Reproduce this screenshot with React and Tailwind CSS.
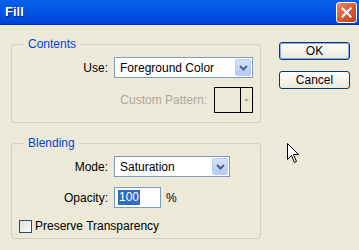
import React from 'react';

const font = { fontFamily: '"Liberation Sans", Arial, sans-serif' };

function Chevron() {
  return (
    <svg width="9" height="6" viewBox="0 0 9 6">
      <path d="M1 1 L4.5 4.5 L8 1" fill="none" stroke="#4d6185" strokeWidth="2" />
    </svg>
  );
}

function Select({ value, width }) {
  return (
    <div className={`flex h-[21px] ${width} border border-[#7f9db9] bg-white`}>
      <div className="flex-1 flex items-center pl-[5px] text-[12px] text-black">{value}</div>
      <div className="w-[16px] m-px rounded-[2px] border border-[#b9cdf6] bg-gradient-to-b from-[#d7e3fd] to-[#b3c8f5] flex items-center justify-center">
        <Chevron />
      </div>
    </div>
  );
}

function Group({ title, children, height, className = '' }) {
  return (
    <div className={`relative w-[250px] ${height} border border-[#d0d0bf] rounded-[3px] ${className}`}>
      <span className="absolute left-[12px] -top-[8px] px-[4px] bg-[#ece9d8] text-[12px] leading-[14px] text-[#0046d5]">
        {title}
      </span>
      {children}
    </div>
  );
}

function Button({ children, def }) {
  return (
    <button
      className={`w-[71px] h-[18px] rounded-[3px] border ${def ? 'border-[#003c74] ring-1 ring-inset ring-[#89adf5]' : 'border-[#003c74]'} bg-gradient-to-b from-white to-[#ece9d8] text-[12px] leading-none text-black flex items-center justify-center`}
    >
      {children}
    </button>
  );
}

export default function App() {
  return (
    <div className="w-[359px] h-[250px] bg-[#ece9d8] overflow-hidden relative select-none" style={font}>
      {/* title bar */}
      <div className="h-[25px] flex items-center justify-between pl-[5px] pr-[2px] bg-gradient-to-b from-[#0a5fea] via-[#0055e5] to-[#0041d6] border-b border-[#0030b0]">
        <span className="text-white font-bold text-[13px] [text-shadow:1px_1px_0_#0a1e6e]">Fill</span>
        <div className="w-[21px] h-[21px] rounded-[3px] border border-white bg-gradient-to-br from-[#e9896a] via-[#d95a36] to-[#c1401c] flex items-center justify-center">
          <svg width="11" height="11" viewBox="0 0 11 11">
            <path d="M1.5 1.5 L9.5 9.5 M9.5 1.5 L1.5 9.5" stroke="white" strokeWidth="2.2" strokeLinecap="square" />
          </svg>
        </div>
      </div>

      <div className="flex">
        {/* left column */}
        <div className="pl-[11px] pt-[19px] flex flex-col">
          <Group title="Contents" height="h-[79px]">
            <div className="flex items-center pt-[12px]">
              <span className="w-[96px] text-right text-[12px] text-black">Use:</span>
              <div className="ml-[6px]">
                <Select value="Foreground Color" width="w-[139px]" />
              </div>
            </div>
            <div className="flex items-center mt-[9px]">
              <span className="w-[195px] text-right text-[12px] text-[#aca899]">Custom Pattern:</span>
              <div className="ml-[7px] w-[39px] h-[26px] border border-black flex">
                <div className="flex-1 border-r border-black"></div>
                <div className="w-[11px] flex items-center justify-center">
                  <svg width="5" height="3" viewBox="0 0 5 3"><path d="M0 0 H5 L2.5 3 Z" fill="#aca899" /></svg>
                </div>
              </div>
            </div>
          </Group>

          <Group title="Blending" height="h-[96px]" className="mt-[20px]">
            <div className="flex items-center pt-[12px]">
              <span className="w-[96px] text-right text-[12px] text-black">Mode:</span>
              <div className="ml-[6px]">
                <Select value="Saturation" width="w-[116px]" />
              </div>
            </div>
            <div className="flex items-center mt-[10px]">
              <span className="w-[96px] text-right text-[12px] text-black">Opacity:</span>
              <div className="ml-[6px] w-[47px] h-[21px] border border-[#7f9db9] bg-white flex items-center pl-[3px]">
                <span className="bg-[#316ac5] text-white text-[12px] leading-[15px] px-px">100</span>
              </div>
              <span className="ml-[5px] text-[12px] text-black">%</span>
            </div>
            <div className="flex items-center mt-[9px] pl-[7px]">
              <div className="w-[13px] h-[13px] border border-[#1c5180] bg-gradient-to-br from-[#dcdcd7] to-white"></div>
              <span className="ml-[3px] text-[12px] text-black">Preserve Transparency</span>
            </div>
          </Group>
        </div>

        {/* right column */}
        <div className="pl-[18px] pt-[17px] flex flex-col gap-[11px]">
          <Button def>OK</Button>
          <Button>Cancel</Button>
        </div>
      </div>

      {/* mouse cursor */}
      <svg className="absolute left-[287px] top-[143px]" width="12" height="21" viewBox="0 0 12 21">
        <path d="M0.5 0.5 L0.5 16.5 L4.5 12.5 L7.5 19.5 L9.5 18.5 L6.5 11.5 L11.5 11.5 Z" fill="white" stroke="black" strokeWidth="1" />
      </svg>
    </div>
  );
}
